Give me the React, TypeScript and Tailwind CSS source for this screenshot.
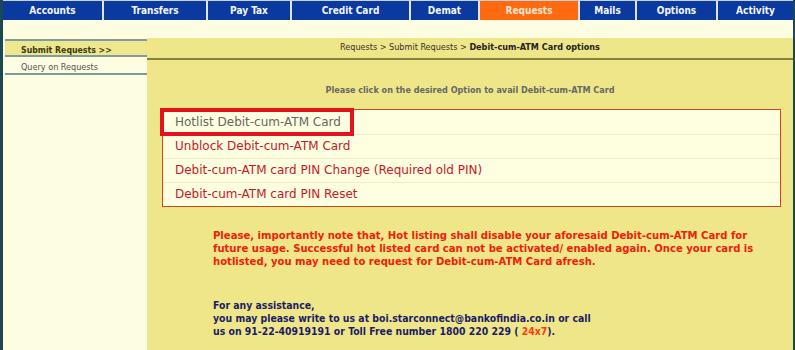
import React from "react";

const tabs = [
  { label: "Accounts", w: "w-[99px]" },
  { label: "Transfers", w: "w-[102px]" },
  { label: "Pay Tax", w: "w-[82px]" },
  { label: "Credit Card", w: "w-[117px]" },
  { label: "Demat", w: "w-[67px]" },
  { label: "Requests", w: "w-[98px]", active: true },
  { label: "Mails", w: "w-[55px]" },
  { label: "Options", w: "w-[79px]" },
  { label: "Activity", w: "flex-1" },
];

const options = [
  "Hotlist Debit-cum-ATM Card",
  "Unblock Debit-cum-ATM Card",
  "Debit-cum-ATM card PIN Change (Required old PIN)",
  "Debit-cum-ATM card PIN Reset",
];

const tahoma = "font-['DejaVu_Sans_Condensed','DejaVu_Sans',sans-serif]";
const verdana = "font-['DejaVu_Sans',Verdana,sans-serif]";

export default function App() {
  return (
    <div className="flex h-[350px] w-[795px] flex-col overflow-hidden border-l-[3px] border-r-2 border-[#1b4854] bg-[#fdfde2]">
      {/* top tabs */}
      <nav className={`flex h-[20px] shrink-0 gap-[2px] border-t border-[#c9d3e8] bg-[#dfe6f2] ${tahoma}`}>
        {tabs.map((t) => (
          <div
            key={t.label}
            className={`${t.w} flex items-center justify-center text-[10px] font-bold ${
              t.active ? "bg-[#ff6a10] text-[#ffe6d4]" : "bg-[#0a3aa0] text-[#f4f6ff]"
            }`}
          >
            {t.label}
          </div>
        ))}
      </nav>

      <div className="flex flex-1">
        {/* left menu */}
        <aside className={`w-[144px] shrink-0 pt-[19px] ${tahoma}`}>
          <div className="ml-[2px] flex h-[18px] items-end border-y-2 border-[#7f9c9a] bg-[#efe690] pl-[16px] text-[8.7px] leading-[10px] font-semibold text-[#3a3a14]">
            Submit Requests &gt;&gt;
          </div>
          <div className="ml-[2px] flex h-[18px] items-end border-b-2 border-[#7f9c9a] pb-[1px] pl-[16px] text-[9px] leading-[10px] text-[#555]">
            Query on Requests
          </div>
        </aside>

        {/* main panel */}
        <main className="relative mt-[18px] flex-1 bg-[#efe68a]">
          <div className={`flex h-[22px] items-center justify-center border-b-2 border-[#85803a] text-[9px] text-[#333] ${tahoma}`}>
            <span>
              Requests &gt; Submit Requests &gt; <b className="text-[#222]">Debit-cum-ATM Card options</b>
            </span>
          </div>

          <p className={`mt-[24px] text-center text-[9px] font-bold text-[#666] ${tahoma}`}>
            Please click on the desired Option to avail Debit-cum-ATM Card
          </p>

          <div className={`relative mr-[12px] ml-[15px] mt-[11px] border border-[#d4481c] bg-[#fefee0] ${verdana}`}>
            {options.map((o, i) => (
              <div
                key={o}
                className={`flex h-[24px] items-center pl-[12px] text-[12px] ${
                  i > 0 ? "border-t border-[#f1ecc4]" : ""
                } ${i === 0 ? "text-[#666]" : "text-[#c8162a]"}`}
              >
                {o}
              </div>
            ))}
            {/* highlight annotation */}
            <div className="absolute top-[-2px] left-[-3px] h-[28px] w-[194px] border-4 border-[#e3121c]" />
          </div>

          <p className={`mt-[22px] ml-[66px] text-[11.2px] leading-[13px] font-bold text-[#f0200a] ${tahoma}`}>
            Please, importantly note that, Hot listing shall disable your aforesaid Debit-cum-ATM Card for
            <br />
            future usage. Successful hot listed card can not be activated/ enabled again. Once your card is
            <br />
            hotlisted, you may need to request for Debit-cum-ATM Card afresh.
          </p>

          <p className={`mt-[31px] ml-[66px] text-[10.4px] leading-[13px] font-bold text-[#1c1c66] ${tahoma}`}>
            For any assistance,
            <br />
            you may please write to us at boi.starconnect@bankofindia.co.in or call
            <br />
            us on 91-22-40919191 or Toll Free number 1800 220 229 ( <span className="text-[#ff3a10]">24x7</span>).
          </p>
        </main>
      </div>
    </div>
  );
}
